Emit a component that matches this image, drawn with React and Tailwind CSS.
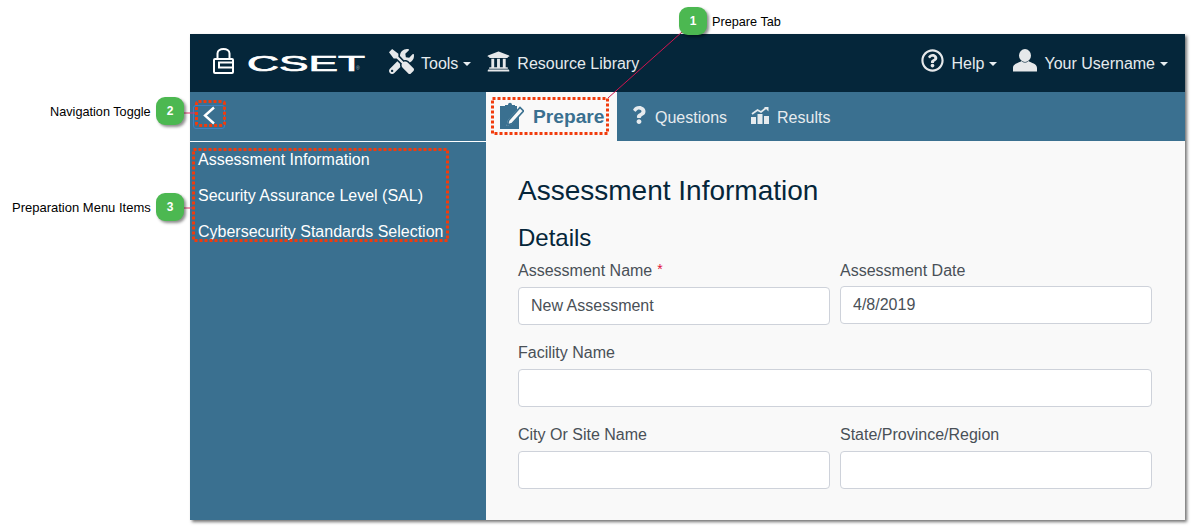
import { FaTools, FaUniversity, FaRegQuestionCircle, FaQuestion } from 'react-icons/fa';

function Caret() {
  return <span className="ml-[5px] inline-block border-x-[4.5px] border-t-[4.5px] border-x-transparent border-t-[#e8eef2] align-middle" />;
}

function NavItem({ icon, label, caret, className = '' }) {
  return (
    <div className={`flex items-center text-[#e6ebee] ${className}`}>
      {icon}
      <span>{label}</span>
      {caret && <Caret />}
    </div>
  );
}

function UserIcon() {
  return (
    <svg width="24" height="23" viewBox="0 0 24 23" fill="#e6e8ea">
      <ellipse cx="12" cy="6.5" rx="6" ry="6.5" />
      <path d="M8.5 12 C6 14 0 14.5 0 19 V22.5 H24 V19 C24 14.5 18 14 15.5 12 C13.5 14 10.5 14 8.5 12 Z" />
    </svg>
  );
}

function PrepareIcon() {
  return (
    <svg width="24" height="27" viewBox="0 0 24 27" className="mb-[3px]">
      <path d="M0 4 H17 V8 L8 18 L6.5 24 L12 22 L19 14 V27 H0 Z" fill="#3a7090" />
      <path d="M5 3 H8 C8 0 12 0 12 3 H15 V6 H5 Z" fill="#3a7090" />
      <path d="M8.5 18.5 L20 5.5 L23.5 9 L12 21.5 L7.5 23 Z" fill="none" stroke="#3a7090" strokeWidth="1.6" />
    </svg>
  );
}

function ResultsIcon() {
  return (
    <svg width="18" height="17" viewBox="0 0 18 17" fill="#e6ebee">
      <rect x="0" y="10" width="5" height="7" />
      <rect x="6.5" y="7" width="5" height="10" />
      <rect x="13" y="9" width="5" height="8" />
      <path d="M1 7 L6.5 3 L10 5 L15 1" fill="none" stroke="#e6ebee" strokeWidth="1.8" />
      <path d="M13 0 H17.5 V4.5 Z" />
    </svg>
  );
}

function Field({ label, value, required, labelHeight = 'h-[28px]', className = '' }) {
  return (
    <div className={`flex flex-col ${className}`}>
      <label className={`${labelHeight} text-[16px] leading-[24px] text-[#495057]`}>
        {label}
        {required && <span className="relative top-[-2px] ml-[1px] text-[14px] text-[#e0103a]"> *</span>}
      </label>
      <input
        readOnly
        value={value || ''}
        className="h-[38px] rounded-[4px] border border-[#ced2da] bg-white px-3 text-[16px] text-[#495057] outline-none"
      />
    </div>
  );
}

function Callout({ n, className }) {
  return (
    <div className={`absolute flex h-[28px] w-[28px] items-center justify-center rounded-[9px] bg-[#4cb851] text-[12px] font-bold text-white shadow-[2px_2px_3px_rgba(0,0,0,0.45)] ${className}`}>
      {n}
    </div>
  );
}

function CalloutLabel({ text, className }) {
  return <div className={`absolute leading-[14px] whitespace-nowrap text-black ${className}`}>{text}</div>;
}

export default function App() {
  return (
    <div className="relative h-[529px] w-[1194px] overflow-hidden bg-white pt-[34px] pl-[190px] font-['Liberation_Sans',Arial,sans-serif]">
      <div className="flex h-[486px] w-[995px] flex-col shadow-[2px_2px_3px_rgba(0,0,0,0.55)]">
        <header className="flex h-[58px] items-center bg-[#05263a] pt-[2px] pr-[17px] pl-[23px] text-[16px]">
          <svg width="21" height="27" viewBox="0 0 21 27" fill="none" className="mb-[7px]">
            <path d="M4.5 12 V6.5 C4.5 0.5 16.5 0.5 16.5 6.5 V12" stroke="#fff" strokeWidth="2" />
            <rect x="1" y="12" width="19" height="14" rx="1" stroke="#fff" strokeWidth="2" />
            <path d="M20 15.5 H6 V20.5 H20" stroke="#fff" strokeWidth="2" />
          </svg>
          <svg width="120" height="26" viewBox="0 0 120 26" className="mb-[3px] ml-[13px]">
            <text x="0" y="21" fontFamily="'Liberation Sans', Arial, sans-serif" fontSize="22.5" fill="#fff" stroke="#fff" strokeWidth="0.7" textLength="118" lengthAdjust="spacingAndGlyphs">CSET</text>
            <text x="109" y="20" fontFamily="'Liberation Sans', Arial, sans-serif" fontSize="5" fill="#9fb0ba">®</text>
          </svg>
          <NavItem className="ml-[22px]" icon={<FaTools className="mr-[7px] mb-[5px] text-[25px] text-[#e6e8ea]" />} label="Tools" caret />
          <NavItem className="ml-[16px]" icon={<FaUniversity className="mr-[7px] mb-[5px] text-[23px] text-[#e6e8ea]" />} label="Resource Library" />
          <div className="ml-auto flex items-center">
            <NavItem icon={<FaRegQuestionCircle className="mr-[8px] mb-[7px] text-[23px] text-[#e6e8ea]" />} label="Help" caret />
            <NavItem className="ml-[16px]" icon={<span className="mr-[7px] mb-[7px]"><UserIcon /></span>} label="Your Username" caret />
          </div>
        </header>

        <div className="flex min-h-0 flex-1 bg-[#3a7090]">
          <aside className="w-[296px] shrink-0">
            <div className="flex h-[50px] items-center border-b border-white pt-[1px] pl-[3px]">
              <button className="flex h-[24px] w-[32px] items-center justify-center rounded-[3px] border border-[#3f7fc0]">
                <svg width="14" height="19" viewBox="0 0 14 19" fill="none" className="mb-[3px]">
                  <path d="M12 1.5 L3 9.5 L12 17.5" stroke="#fff" strokeWidth="2.4" />
                </svg>
              </button>
            </div>
            <nav className="flex flex-col gap-[12px] pt-[6px] pl-[8px] text-[16px] leading-[24px] text-white">
              <div>Assessment Information</div>
              <div>Security Assurance Level (SAL)</div>
              <div>Cybersecurity Standards Selection</div>
            </nav>
          </aside>

          <div className="flex min-w-0 flex-1 flex-col">
            <div className="flex h-[49px] items-stretch text-[16px] text-[#e6ebee]">
              <div className="flex w-[131px] items-center bg-[#f9f9f9] pl-[14px] text-[#3a7090]">
                <PrepareIcon />
                <span className="mt-[2px] ml-[9px] text-[19.2px] font-bold">Prepare</span>
              </div>
              <div className="ml-[13px] flex items-center pt-[2px]">
                <FaQuestion className="mr-[7px] mb-[5px] text-[18px] text-[#e6ebee]" />
                Questions
              </div>
              <div className="ml-[24px] flex items-center pt-[2px]">
                <span className="mr-[8px] mb-[5px]"><ResultsIcon /></span>
                Results
              </div>
            </div>

            <main className="flex-1 bg-[#f9f9f9] pt-[33px] pr-[33px] pl-[32px]">
              <h1 className="text-[28px] leading-[34px] text-[#05263a]">Assessment Information</h1>
              <h2 className="mt-[15px] text-[24px] leading-[29px] text-[#05263a]">Details</h2>
              <div className="mt-[7px] grid grid-cols-2 gap-x-[10px] gap-y-[16px]">
                <Field label="Assessment Name" value="New Assessment" required />
                <Field label="Assessment Date" value="4/8/2019" labelHeight="h-[27px]" />
                <Field label="Facility Name" className="col-span-2" />
                <Field label="City Or Site Name" />
                <Field label="State/Province/Region" />
              </div>
            </main>
          </div>
        </div>
      </div>

      {/* callout lines and highlight boxes */}
      <svg width="1194" height="529" fill="none" className="pointer-events-none absolute top-0 left-0">
        <line x1="682" y1="32" x2="608" y2="98" stroke="#d2144f" />
        <line x1="183" y1="113" x2="196" y2="113" stroke="#e0306a" />
        <line x1="183" y1="208" x2="193" y2="208" stroke="#e0306a" />
        <rect x="492.5" y="98.5" width="115" height="35" stroke="#f13b0c" strokeWidth="3" strokeDasharray="3 2" />
        <rect x="196.5" y="101.5" width="28" height="24" rx="2" stroke="#f13b0c" strokeWidth="3" strokeDasharray="3 2" />
        <rect x="193.5" y="149.5" width="254" height="91" stroke="#f13b0c" strokeWidth="3" strokeDasharray="3 2" />
      </svg>

      <Callout n="1" className="top-[7px] left-[679px]" />
      <Callout n="2" className="top-[97px] left-[156px]" />
      <Callout n="3" className="top-[193px] left-[156px]" />
      <CalloutLabel text="Prepare Tab" className="top-[15px] left-[712px] text-[12.7px]" />
      <CalloutLabel text="Navigation Toggle" className="top-[105px] left-[50px] text-[12.7px]" />
      <CalloutLabel text="Preparation Menu Items" className="top-[201px] left-[12px] text-[13px]" />
    </div>
  );
}
